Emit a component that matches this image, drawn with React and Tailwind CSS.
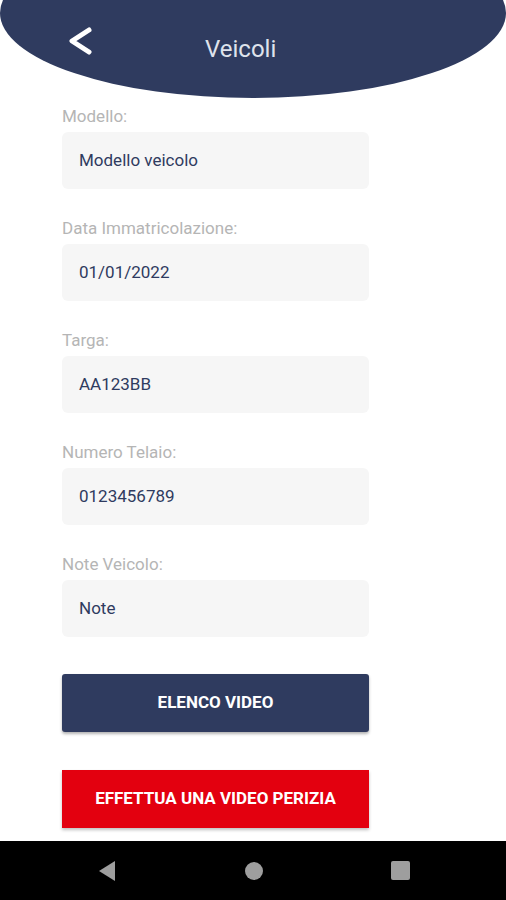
const fields = [
  { label: 'Modello:', value: 'Modello veicolo' },
  { label: 'Data Immatricolazione:', value: '01/01/2022' },
  { label: 'Targa:', value: 'AA123BB' },
  { label: 'Numero Telaio:', value: '0123456789' },
  { label: 'Note Veicolo:', value: 'Note' },
];

export default function App() {
  return (
    <div className="flex h-[900px] w-[506px] flex-col overflow-hidden bg-white font-['Roboto',sans-serif]">
      <header className="relative h-[98px] shrink-0 overflow-hidden">
        <div className="-mt-[72px] h-[170px] w-[506px] rounded-[50%] bg-[#2f3b5f]" />
        <div className="absolute inset-x-0 top-[25px] flex h-[32px] items-center">
          <svg className="ml-[65px]" width="28" height="32" viewBox="0 0 28 32">
            <path d="M24 5 L7 16 L24 27" fill="none" stroke="#fff" strokeWidth="5" strokeLinecap="round" strokeLinejoin="round" />
          </svg>
          <h1 className="ml-[112px] mt-[16px] text-[24px] leading-none text-[#dfe3ec]">Veicoli</h1>
        </div>
      </header>

      <main className="flex flex-1 flex-col px-[62px] pt-[7px]">
        {fields.map((f) => (
          <div key={f.label} className="mb-[28px] flex flex-col">
            <label className="h-[22px] text-[17px] leading-[22px] text-[#b5b5b5]">{f.label}</label>
            <div className="mt-[5px] flex h-[57px] w-[307px] items-center rounded-[6px] bg-[#f6f6f6] px-[17px] text-[17px] text-[#2f3b5f]">
              {f.value}
            </div>
          </div>
        ))}

        <button className="mt-[9px] h-[58px] w-[307px] rounded-[3px] bg-[#2f3b5f] text-[17px] font-bold text-white shadow-[0_2px_3px_rgba(0,0,0,0.3)]">
          ELENCO VIDEO
        </button>
        <button className="mt-[38px] h-[58px] w-[307px] bg-[#e3000f] text-[17px] font-bold text-white shadow-[0_2px_3px_rgba(0,0,0,0.25)]">
          EFFETTUA UNA VIDEO PERIZIA
        </button>
      </main>

      <nav className="flex h-[59px] shrink-0 items-center justify-center gap-[128px] bg-black">
        <svg width="20" height="22" viewBox="0 0 20 22">
          <path d="M18 1 L2 11 L18 21 Z" fill="#9e9e9e" />
        </svg>
        <div className="h-[18px] w-[18px] rounded-full bg-[#9e9e9e]" />
        <div className="h-[19px] w-[19px] rounded-[2px] bg-[#9e9e9e]" />
      </nav>
    </div>
  );
}
